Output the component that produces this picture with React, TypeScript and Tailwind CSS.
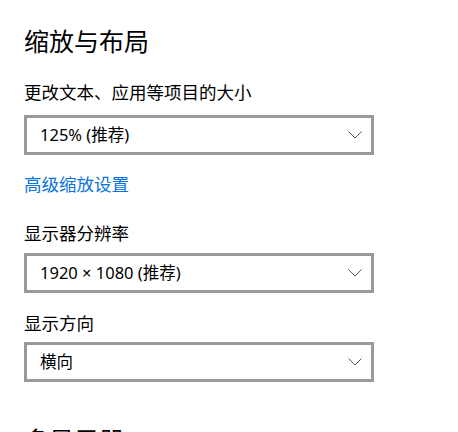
import React from "react";

const font = { fontFamily: '"Noto Sans CJK SC", "Noto Sans", sans-serif' };
const latin = { fontFamily: '"Noto Sans", "Noto Sans CJK SC", sans-serif' };

function Chevron(): React.JSX.Element {
	return (
		<svg width="14" height="8" viewBox="0 0 14 8" fill="none">
			<path d="M0.5 0.5 L7 7 L13.5 0.5" stroke="#555" strokeWidth="1" />
		</svg>
	);
}

function Select({ value }: { value: string }): React.JSX.Element {
	return (
		<div className="w-[350px] h-[40px] border-[3px] border-[#999999] bg-white flex items-center justify-between pl-[13px] pr-[9px]">
			<span className="text-[16.5px] text-black" style={latin}>
				{value}
			</span>
			<Chevron />
		</div>
	);
}

export default function App(): React.JSX.Element {
	return (
		<div className="w-[458px] h-[432px] overflow-hidden bg-white pl-[24px]" style={font}>
			<h1 className="mt-[24px] h-[32px] leading-[32px] text-[25px] font-normal text-black">缩放与布局</h1>
			<div className="mt-[24px] h-[24px] leading-[24px] text-[17.5px] text-black">更改文本、应用等项目的大小</div>
			<div className="mt-[11px]">
				<Select value="125% (推荐)" />
			</div>
			<div className="mt-[17px] h-[24px] leading-[24px] text-[17.5px] text-[#0a74dc]">高级缩放设置</div>
			<div className="mt-[25px] h-[24px] leading-[24px] text-[17.5px] text-black">显示器分辨率</div>
			<div className="mt-[8px]">
				<Select value="1920 × 1080 (推荐)" />
			</div>
			<div className="mt-[18px] h-[24px] leading-[24px] text-[17.5px] text-black">显示方向</div>
			<div className="mt-[7px]">
				<Select value="横向" />
			</div>
			<h2 className="mt-[41px] h-[32px] leading-[32px] text-[25px] font-normal text-black">多显示器</h2>
		</div>
	);
}
